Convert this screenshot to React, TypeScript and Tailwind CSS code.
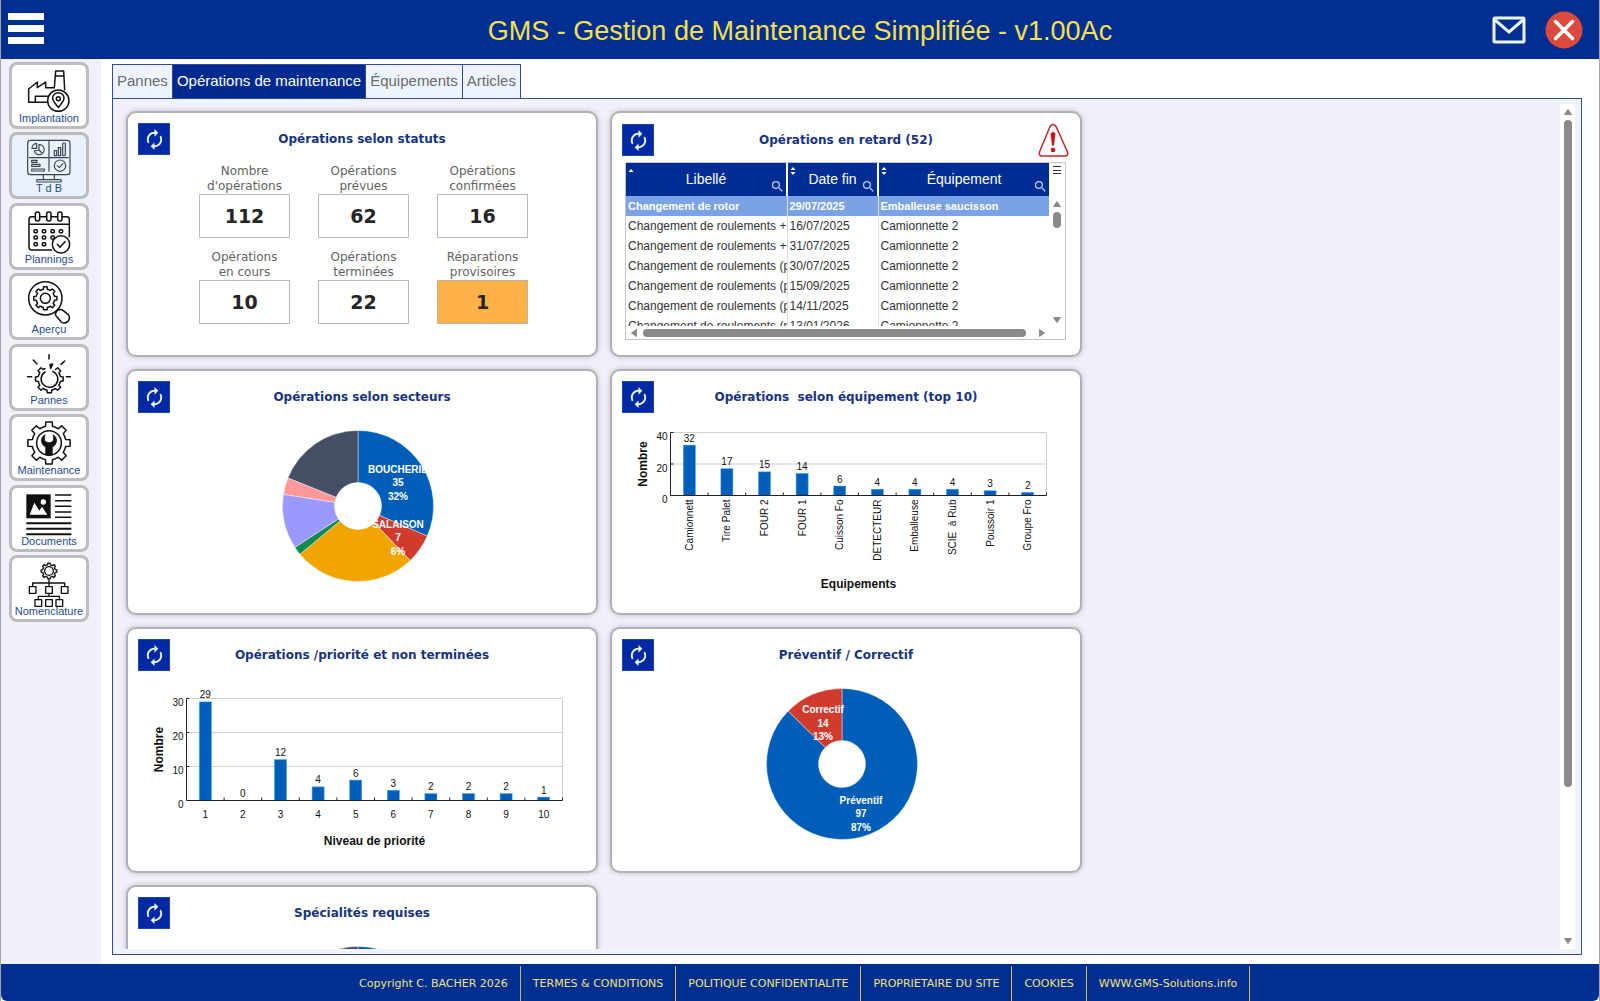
import type { ReactNode } from 'react'
import { MdAutorenew, MdSearch } from 'react-icons/md'

// outline of a cog, optionally left open between two angles (degrees, clockwise from the top)
function gear(cx: number, cy: number, outer: number, inner: number, teeth: number, from = 0, to = 360) {
  const step = 360 / teeth
  const at = (r: number, deg: number) => {
    const a = ((deg - 90) * Math.PI) / 180
    return `${(cx + r * Math.cos(a)).toFixed(1)} ${(cy + r * Math.sin(a)).toFixed(1)}`
  }
  const points: string[] = []
  for (let deg = from; deg < to - 1; deg += step) {
    points.push(
      at(inner, deg - step * 0.27),
      at(outer, deg - step * 0.19),
      at(outer, deg + step * 0.19),
      at(inner, deg + step * 0.27),
      at(inner, deg + step * 0.5)
    )
  }
  return 'M' + points.join('L') + (to - from === 360 ? 'Z' : '')
}

const line = { fill: 'none', stroke: '#111', strokeWidth: 4.5, strokeLinecap: 'round', strokeLinejoin: 'round' } as const

const FactoryIcon = (
  <svg viewBox="81 42 132 132" className="size-11" {...line}>
    <path d="M140 142H86V102L112 81V98L137 81V98H162M163 98L167 48H191L194 104M166 63H192M106 142V124H142" />
    <circle cx="175" cy="137" r="32" fill="#fff" />
    <path d="M175 157C166 146 158 138 158 130a17 17 0 0 1 34 0C192 138 184 146 175 157Z" />
    <circle cx="175" cy="131" r="6" />
  </svg>
)

const DashboardIcon = (
  <svg viewBox="81 253 132 132" className="size-11" {...line} stroke="#3b4250" strokeWidth={3.5}>
    <rect x="83" y="257" width="127" height="103" rx="9" />
    <path d="M147 257V350M88 309H205" />
    <path d="M110 266V281H96a15 15 0 0 1 14-15Z" />
    <path d="M117 270a15 15 0 1 1 -14 19L117 286ZM117 286L127 296" />
    <rect x="163" y="288" width="7" height="15" />
    <rect x="175" y="279" width="7" height="24" />
    <rect x="188" y="265" width="8" height="38" rx="3" />
    <rect x="95" y="317" width="16" height="6" />
    <rect x="95" y="329" width="25" height="6" />
    <rect x="95" y="343" width="38" height="6" />
    <circle cx="180" cy="333" r="17" />
    <path d="M172 333l6 6 11-12M130 360V374M163 360V374" />
    <rect x="110" y="375" width="74" height="7" rx="3" />
  </svg>
)

const CalendarIcon = (
  <svg viewBox="81 464 132 132" className="size-11" {...line}>
    <path d="M155 584H95a8 8 0 0 1-8-8V492a8 8 0 0 1 8-8H106M119 484H140M153 484H173M186 484h14a8 8 0 0 1 8 8v52M87 507H208" />
    <rect x="106" y="470" width="13" height="27" rx="6" />
    <rect x="140" y="470" width="13" height="27" rx="6" />
    <rect x="173" y="470" width="13" height="27" rx="6" />
    {[102, 127, 153, 178].map((x) => <rect key={x} x={x} y="523" width="10" height="9" rx="3" />)}
    {[102, 127, 153].map((x) => <rect key={x} x={x} y="542" width="10" height="9" rx="3" />)}
    {[102, 127].map((x) => <rect key={x} x={x} y="562" width="10" height="9" rx="3" />)}
    <circle cx="183" cy="567" r="26" fill="#fff" />
    <path d="M172 567l8 9 15-17" />
  </svg>
)

const SearchGearIcon = (
  <svg viewBox="81 676 132 132" className="size-11" {...line}>
    <circle cx="136" cy="731" r="50" />
    <path d={gear(136, 731, 35, 28, 8)} />
    <circle cx="136" cy="731" r="15" />
    <path d="M172 767L167 775Q165 780 169 785L184 802Q194 809 204 800Q212 790 205 780L190 768Q184 763 178 765L172 767" />
  </svg>
)

const BreakdownIcon = (
  <svg viewBox="81 32 132 132" className="size-11" {...line}>
    <path d="M147 43V56M100 59L111 71M194 62L183 72M82 109H95M199 109H212" />
    <path d={gear(148, 116, 42, 34, 8, 45, 350)} />
    <path d="M158 93a25 25 0 1 1-23 2" />
    <path d="M150 73L158 71L152 84Z" fill="#111" />
  </svg>
)

const MaintenanceIcon = (
  <svg viewBox="81 243 132 132" className="size-11" {...line}>
    <path d={gear(147, 309, 64, 51, 8)} />
    <circle cx="147" cy="309" r="37" />
    <path
      d="M134 284Q124 291 124 302Q125 315 137 321V344Q147 347 157 344V321Q169 315 170 302Q170 291 160 284V302Q147 314 134 302Z"
      fill="#111"
      strokeWidth={2}
    />
  </svg>
)

const DocumentIcon = (
  <svg viewBox="81 454 132 132" className="size-11 overflow-visible" fill="none" stroke="#111" strokeWidth="4.5">
    <rect x="79" y="461" width="73" height="72" fill="#111" stroke="none" />
    <path d="M89 522L103 486L118 510L126 498L142 522Z" fill="#fff" stroke="none" />
    <circle cx="130" cy="484" r="8" fill="#fff" stroke="none" />
    <path d="M165 463H214M165 480H214M165 497H214M165 514H214M165 530H214" />
    <path d="M79 548H214M79 564H214M79 581H214" strokeWidth="6" />
  </svg>
)

const TreeIcon = (
  <svg viewBox="81 665 132 132" className="size-11 overflow-visible" {...line} strokeWidth={4}>
    <path d={gear(147, 692, 24, 19, 8)} />
    <circle cx="147" cy="692" r="13" />
    <path d="M147 718V737M98 738V728H194V738M147 760V768M115 778V768H178V778" />
    {[88, 137, 184].map((x) => <rect key={x} x={x} y="739" width="20" height="20" />)}
    {[105, 137, 168].map((x) => <rect key={x} x={x} y="778" width="20" height="20" />)}
  </svg>
)

const menu = [
  { label: 'Implantation', icon: FactoryIcon },
  { label: 'T d B', icon: DashboardIcon, active: true },
  { label: 'Plannings', icon: CalendarIcon },
  { label: 'Aperçu', icon: SearchGearIcon },
  { label: 'Pannes', icon: BreakdownIcon },
  { label: 'Maintenance', icon: MaintenanceIcon },
  { label: 'Documents', icon: DocumentIcon },
  { label: 'Nomenclature', icon: TreeIcon },
]

const tabs = ['Pannes', 'Opérations de maintenance', 'Équipements', 'Articles']

const stats = [
  { id: 'total', label: ['Nombre', "d'opérations"], value: 112 },
  { id: 'prevues', label: ['Opérations', 'prévues'], value: 62 },
  { id: 'confirmees', label: ['Opérations', 'confirmées'], value: 16 },
  { id: 'encours', label: ['Opérations', 'en cours'], value: 10 },
  { id: 'terminees', label: ['Opérations', 'terminées'], value: 22 },
  { id: 'provisoires', label: ['Réparations', 'provisoires'], value: 1, warn: true },
]

const lateRows = [
  ['Changement de rotor', '29/07/2025', 'Emballeuse saucisson'],
  ['Changement de roulements +', '16/07/2025', 'Camionnette 2'],
  ['Changement de roulements +', '31/07/2025', 'Camionnette 2'],
  ['Changement de roulements (p', '30/07/2025', 'Camionnette 2'],
  ['Changement de roulements (p', '15/09/2025', 'Camionnette 2'],
  ['Changement de roulements (p', '14/11/2025', 'Camionnette 2'],
  ['Changement de roulements (p', '13/01/2026', 'Camionnette 2'],
]

const footerLinks = ['TERMES & CONDITIONS', 'POLITIQUE CONFIDENTIALITE', 'PROPRIETAIRE DU SITE', 'COOKIES', 'WWW.GMS-Solutions.info']

function Card({ title, aside, children }: { title: string; aside?: ReactNode; children?: ReactNode }) {
  return (
    <section className="h-[246px] overflow-hidden rounded-[10px] border-2 border-[#b0b1b6] bg-white pt-[10px] shadow-[0_0_5px_rgba(90,90,110,0.35)]">
      <div className="grid h-8 grid-cols-[32px_1fr_32px] items-center px-[10px]">
        <button aria-label="Actualiser" className="flex size-8 items-center justify-center border border-[#1c45a8] bg-[#0029a3] text-[#eaf6ff]">
          <MdAutorenew size={23} />
        </button>
        <h2 className="text-center font-['DejaVu_Sans',sans-serif] text-xs font-bold whitespace-pre text-[#16337f]">{title}</h2>
        {aside}
      </div>
      {children}
    </section>
  )
}

type Slice = { value: number; color: string }
type PieLabel = { x: number; y: number; lines: string[] }

function Donut({ slices, labels = [] }: { slices: Slice[]; labels?: PieLabel[] }) {
  const cx = 232
  const cy = 137
  const total = slices.reduce((sum, s) => sum + s.value, 0)
  const at = (r: number, part: number) => {
    const a = part * 2 * Math.PI - Math.PI / 2
    return `${cx + r * Math.cos(a)} ${cy + r * Math.sin(a)}`
  }
  let done = 0
  return (
    <svg viewBox="2 44 468 200" className="h-[200px] w-full">
      {slices.map((s, i) => {
        const start = done / total
        done += s.value
        const end = done / total
        const large = end - start > 0.5 ? 1 : 0
        return (
          <path
            key={i}
            d={`M${at(23.5, start)}L${at(75.5, start)}A75.5 75.5 0 ${large} 1 ${at(75.5, end)}L${at(23.5, end)}A23.5 23.5 0 ${large} 0 ${at(23.5, start)}Z`}
            fill={s.color}
            stroke="#fff"
            strokeOpacity="0.5"
            strokeWidth="0.8"
          />
        )
      })}
      <g fill="#fff" textAnchor="middle" className="font-['Liberation_Sans',sans-serif] text-[10px] font-bold">
        {labels.map((l) =>
          l.lines.map((text, i) => (
            <text key={text} x={l.x} y={l.y + i * 13.5}>
              {text}
            </text>
          ))
        )}
      </g>
    </svg>
  )
}

type BarChartProps = {
  data: [string, number][]
  max: number
  step: number
  left: number
  top: number
  bottom: number
  axisX: number
  titleY: number
  xTitle: string
  vertical?: boolean
}

function BarChart({ data, max, step, left, top, bottom, axisX, titleY, xTitle, vertical }: BarChartProps) {
  const width = 376
  const pitch = width / data.length
  const yOf = (v: number) => bottom - (v / max) * (bottom - top)
  const ticks: number[] = []
  for (let v = 0; v <= max; v += step) ticks.push(v)

  return (
    <svg viewBox="2 44 468 200" className="h-[200px] w-full font-['Liberation_Sans',sans-serif] text-[10px]">
      {ticks.slice(1).map((v) => (
        <path key={v} d={`M${left} ${yOf(v)}H${left + width}`} stroke="#cfcfcf" />
      ))}
      <path d={`M${left + width} ${top}V${bottom}`} stroke="#cfcfcf" />
      {data.map(([name, v], i) => {
        const x = left + pitch * (i + 0.5)
        return (
          <g key={name} fill="#111">
            {v > 0 && <rect x={x - 6} y={yOf(v)} width="12" height={bottom - yOf(v)} fill="#005eb8" stroke="#3fa2ea" strokeWidth="0.6" />}
            <text x={x} y={yOf(v) - 3.5} textAnchor="middle">{v}</text>
            {vertical ? (
              <text transform={`translate(${x + 3.5} ${bottom + 4}) rotate(-90)`} textAnchor="end" className="whitespace-pre">{name}</text>
            ) : (
              <text x={x} y={bottom + 17} textAnchor="middle">{name}</text>
            )}
            <path d={`M${left + pitch * (i + 1)} ${bottom}v-3`} stroke="#222" />
          </g>
        )
      })}
      {ticks.map((v) => (
        <g key={v}>
          <path d={`M${left} ${yOf(v)}h3`} stroke="#222" />
          <text x={left - 3} y={yOf(v) + 7.5} textAnchor="end" fill="#111">{v}</text>
        </g>
      ))}
      <path d={`M${left} ${top}V${bottom}H${left + width}`} fill="none" stroke="#222" />
      <g className="text-xs font-bold" textAnchor="middle" fill="#111">
        <text transform={`translate(${axisX} ${(top + bottom) / 2}) rotate(-90)`}>Nombre</text>
        <text x={left + width / 2} y={titleY}>{xTitle}</text>
      </g>
    </svg>
  )
}

const Arrow = ({ d, className }: { d: string; className?: string }) => (
  <svg viewBox="0 0 8 8" className={className ?? 'size-2'} fill="#8a8a8a" stroke="#8a8a8a" strokeLinejoin="round">
    <path d={d} />
  </svg>
)

const UP = 'M4 1.5L7.5 6.5H.5Z'
const DOWN = 'M4 6.5L7.5 1.5H.5Z'
const LEFT = 'M1.5 4L6.5 .5V7.5Z'
const RIGHT = 'M6.5 4L1.5 .5V7.5Z'

function StatusCard() {
  return (
    <Card title="Opérations selon statuts">
      <div className="mt-[9px] ml-[71px] grid grid-cols-[repeat(3,91px)] gap-x-7 gap-y-3">
        {stats.map((s) => (
          <div key={s.id} className="font-['DejaVu_Sans',sans-serif]">
            <label htmlFor={s.id} className="block text-center text-xs leading-[15px] text-[#626262]">
              {s.label[0]}
              <br />
              {s.label[1]}
            </label>
            <input
              id={s.id}
              readOnly
              value={s.value}
              className={
                'block h-11 w-full border text-center text-[19px] font-bold text-[#262626] outline-none ' +
                (s.warn ? 'border-[#c2b49c] bg-[#ffb347]' : 'border-[#b9b9b9] bg-white')
              }
            />
          </div>
        ))}
      </div>
    </Card>
  )
}

function LateCard() {
  const warning = (
    <svg viewBox="0 0 32 34" className="h-[34px] w-8" aria-label="Attention">
      <path d="M12 3.5Q15 -.5 18 3.5L29.500 29Q30.500 33 27 33H4Q.5 33 1.500 29Z" fill="#fff" stroke="#c4262a" strokeWidth="1.500" />
      <path d="M12.500 10.500Q15 7.500 17.500 10.500L16 22.500H14Z" fill="#c4161c" />
      <circle cx="15" cy="27" r="2.300" fill="#c4161c" />
    </svg>
  )
  return (
    <Card title="Opérations en retard (52)" aside={warning}>
      <div className="mt-[7px] mr-[14px] ml-[13px] border border-[#c4c4c8]">
        <div className="flex h-[163px]">
          <div className="min-w-0 flex-1 overflow-hidden">
            <table className="w-full table-fixed border-collapse font-['Liberation_Sans',sans-serif] text-xs">
              <colgroup>
                <col className="w-[161px]" />
                <col className="w-[91px]" />
                <col />
              </colgroup>
              <thead>
                <tr className="h-[33px] bg-[#002d93] text-white">
                  {['Libellé', 'Date fin', 'Équipement'].map((h, i) => (
                    <th key={h} className={'p-0 text-sm font-normal' + (i < 2 ? ' border-r-2 border-white' : '')}>
                      <div className="grid h-[33px] grid-cols-[16px_1fr_16px]">
                        <svg viewBox="0 0 16 16" className="size-4" fill="#fff">
                          <path d={i === 0 ? 'M2.500 9L5 6L7.500 9Z' : 'M2.500 7L5 4L7.500 7ZM2.500 9L5 12L7.500 9Z'} />
                        </svg>
                        <span className="pb-[2px] self-center">{h}</span>
                        <MdSearch size={15} className="mb-[2px] self-end text-[#b9cdf2]" />
                      </div>
                    </th>
                  ))}
                </tr>
              </thead>
              <tbody>
                {lateRows.map((row, r) => (
                  <tr key={r} className={r === 0 ? 'h-5 bg-[#7ba2e4] text-[11px] font-bold text-white' : 'h-5 text-[#333]'}>
                    {row.map((cell, c) => (
                      <td
                        key={c}
                        className={'overflow-hidden p-0 pl-[2px] leading-5 whitespace-nowrap' + (c < 2 ? ' border-r border-[#dcdfe8]' : '')}
                      >
                        {cell}
                      </td>
                    ))}
                  </tr>
                ))}
              </tbody>
            </table>
          </div>
          <div className="flex w-4 flex-col items-center pt-[3px] pb-[2px]">
            <div className="flex h-2 w-2 flex-col justify-center border-y border-[#333]">
              <span className="h-px w-full bg-[#333]" />
            </div>
            <Arrow d={UP} className="mt-[26px] size-2" />
            <span className="mt-1 h-4 w-2 rounded-full bg-[#8a8a8a]" />
            <Arrow d={DOWN} className="mt-auto size-2" />
          </div>
        </div>
        <div className="flex h-[13px] items-center gap-1 pr-[19px] pl-1">
          <Arrow d={LEFT} />
          <span className="mr-2 ml-px h-2 flex-1 rounded-full bg-[#8a8a8a]" />
          <Arrow d={RIGHT} />
        </div>
      </div>
    </Card>
  )
}

export default function App() {
  return (
    <div className="flex h-screen flex-col overflow-hidden border-x border-[#a3a5ab] bg-white font-['Liberation_Sans',Arial,sans-serif]">
      <header className="grid h-[59px] shrink-0 grid-cols-[1fr_auto_1fr] items-center bg-[#002f91] px-4">
        <button aria-label="Menu" className="-ml-[9px] mb-[2px] flex h-[31px] w-9 flex-col justify-between">
          <span className="h-[7px] w-full bg-white" />
          <span className="h-[7px] w-full bg-white" />
          <span className="h-[7px] w-full bg-white" />
        </button>
        <h1 className="pt-1 text-[27px] text-[#f5e050]">GMS - Gestion de Maintenance Simplifiée - v1.00Ac</h1>
        <div className="flex items-center justify-end gap-[19px]">
          <button aria-label="Messages">
            <svg viewBox="0 0 34 28" className="h-7 w-[34px]" fill="none" stroke="#eaf6ff" strokeWidth="3">
              <rect x="2" y="2" width="30" height="24" rx="1" />
              <path d="M3 4L17 16L31 4" />
            </svg>
          </button>
          <button aria-label="Fermer">
            <svg viewBox="0 0 38 38" className="size-[38px]">
              <circle cx="19" cy="19" r="18.500" fill="#dc4a3d" />
              <path d="M10.500 10.500L27.500 27.500M27.500 10.500L10.500 27.500" stroke="#fff" strokeWidth="3.500" strokeLinecap="round" />
            </svg>
          </button>
        </div>
      </header>

      <div className="flex min-h-0 flex-1">
        {/* Sidebar */}
        <nav className="w-[100px] shrink-0 bg-[#f1f0f8] pt-[3px] pl-2">
          <div className="flex h-[560px] w-[80px] flex-col justify-between">
            {menu.map((m) => (
              <button
                key={m.label}
                className={
                  'flex h-[67px] flex-col items-center rounded-lg border-[3px] border-[#bcbcc0] pt-1 ' +
                  (m.active ? 'bg-[#e9f1ff]' : 'bg-white')
                }
              >
                {m.icon}
                <span className="-mt-px text-[11px] leading-3 whitespace-nowrap text-[#1f4a92]">{m.label}</span>
              </button>
            ))}
          </div>
        </nav>

        <main className="flex min-w-0 flex-1 flex-col pt-[5px] pr-[17px] pb-[9px] pl-[11px]">
          {/* Tabs */}
          <div role="tablist" className="flex h-[34px] shrink-0 border-l border-[#34499a]">
            {tabs.map((t, i) => (
              <button
                key={t}
                role="tab"
                aria-selected={i === 1}
                className={
                  'border-t border-r border-[#34499a] px-1 text-[15px] ' +
                  (i === 1 ? 'bg-[#002a90] text-white' : 'bg-[#eef4ff] text-[#6a6a6a]')
                }
              >
                {t}
              </button>
            ))}
          </div>

          <div className="flex min-h-0 flex-1 border border-[#34499a] bg-[#eff3fd] py-[5px] pr-[6px] pl-[3px]">
            <div className="min-w-0 flex-1 overflow-hidden bg-[#f1f0f8] pt-[7px] pl-[10px]">
              <div className="grid grid-cols-[472px_472px] gap-3">
                <StatusCard />
                <LateCard />

                <Card title="Opérations selon secteurs">
                  <Donut
                    slices={[
                      { value: 35, color: '#005eb8' },
                      { value: 7, color: '#d13b2e' },
                      { value: 29, color: '#f0a500' },
                      { value: 2, color: '#128a50' },
                      { value: 13, color: '#9a99ff' },
                      { value: 4, color: '#ff9999' },
                      { value: 21, color: '#454e64' },
                    ]}
                    labels={[
                      { x: 272, y: 103.5, lines: ['BOUCHERIE', '35', '32%'] },
                      { x: 272, y: 158.5, lines: ['SALAISON', '7', '6%'] },
                    ]}
                  />
                </Card>

                <Card title="Opérations  selon équipement (top 10)">
                  <BarChart
                    data={[
                      ['Camionnett', 32],
                      ['Tire Palet', 17],
                      ['FOUR 2', 15],
                      ['FOUR 1', 14],
                      ['Cuisson Fo', 6],
                      ['DETECTEUR', 4],
                      ['Emballeuse', 4],
                      ['SCIE  à Rub', 4],
                      ['Poussoir 1', 3],
                      ['Groupe Fro', 2],
                    ]}
                    max={40}
                    step={20}
                    left={60.5}
                    top={63.5}
                    bottom={126.5}
                    axisX={37}
                    titleY={219}
                    xTitle="Equipements"
                    vertical
                  />
                </Card>

                <Card title="Opérations /priorité et non terminées">
                  <BarChart
                    data={[
                      ['1', 29],
                      ['2', 0],
                      ['3', 12],
                      ['4', 4],
                      ['5', 6],
                      ['6', 3],
                      ['7', 2],
                      ['8', 2],
                      ['9', 2],
                      ['10', 1],
                    ]}
                    max={30}
                    step={10}
                    left={60.5}
                    top={71.5}
                    bottom={173.5}
                    axisX={37}
                    titleY={218}
                    xTitle="Niveau de priorité"
                  />
                </Card>

                <Card title="Préventif / Correctif">
                  <Donut
                    slices={[
                      { value: 97, color: '#005eb8' },
                      { value: 14, color: '#d13b2e' },
                    ]}
                    labels={[
                      { x: 213, y: 86, lines: ['Correctif', '14', '13%'] },
                      { x: 251, y: 176.5, lines: ['Préventif', '97', '87%'] },
                    ]}
                  />
                </Card>

                <Card title="Spécialités requises">
                  <Donut
                    slices={[
                      { value: 60, color: '#005eb8' },
                      { value: 37, color: '#d13b2e' },
                      { value: 3, color: '#454e64' },
                    ]}
                  />
                </Card>
              </div>
            </div>

            {/* Scroll bar */}
            <div className="flex w-[15px] flex-col items-center gap-1 bg-white py-1">
              <Arrow d={UP} />
              <div className="flex w-2 flex-1 flex-col">
                <span className="h-[82%] w-full rounded-full bg-[#8a8a8a]" />
              </div>
              <Arrow d={DOWN} />
            </div>
          </div>
        </main>
      </div>

      <footer className="flex h-[37px] shrink-0 rounded-b-md bg-[#002f91] pt-[2px] pl-[346px] font-['DejaVu_Sans',sans-serif] text-[11px] text-[#f2e27a]">
        <span className="flex items-center border-r border-[#c9b84a] px-3 pt-[2px]">Copyright C. BACHER 2026</span>
        {footerLinks.map((l) => (
          <a key={l} href="#" className="flex items-center border-r border-[#c9b84a] px-3 pt-[2px]">
            {l}
          </a>
        ))}
      </footer>
    </div>
  )
}
